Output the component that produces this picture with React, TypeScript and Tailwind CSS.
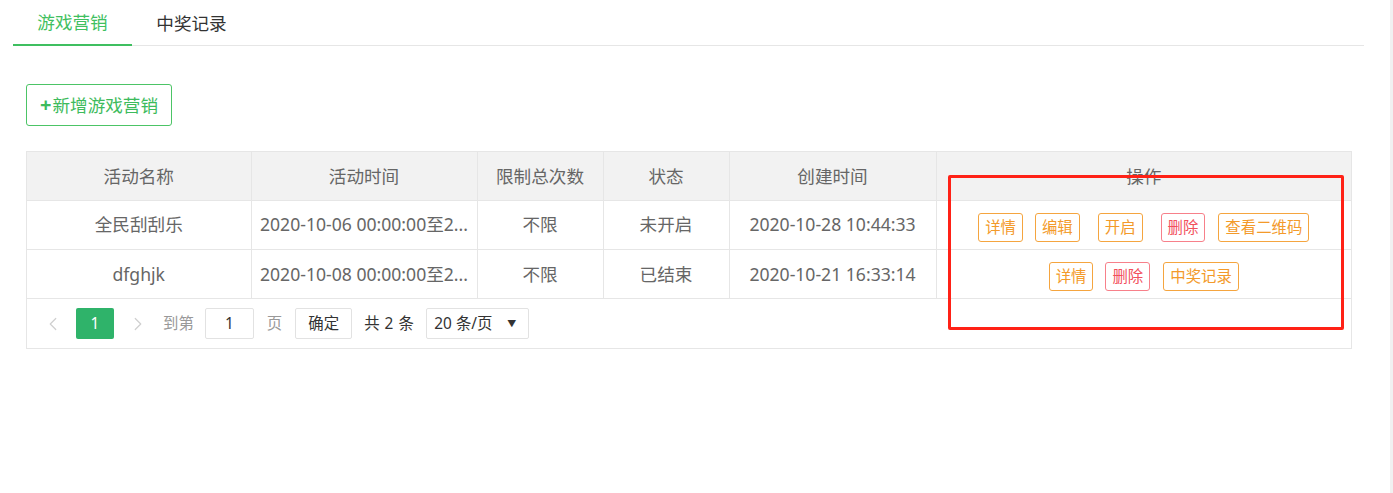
import { ChevronLeft, ChevronRight } from "lucide-react";

const font = { fontFamily: '"Noto Sans", "Noto Sans CJK SC", sans-serif' };

const rows = [
    {
        name: "全民刮刮乐",
        time: "2020-10-06 00:00:00至2...",
        limit: "不限",
        status: "未开启",
        created: "2020-10-28 10:44:33",
        actions: ["详情", "编辑", "开启", "删除", "查看二维码"],
        gaps: ["mr-[12px]", "mr-[18px]", "mr-[18px]", "mr-[13px]", ""],
    },
    {
        name: "dfghjk",
        time: "2020-10-08 00:00:00至2...",
        limit: "不限",
        status: "已结束",
        created: "2020-10-21 16:33:14",
        actions: ["详情", "删除", "中奖记录"],
        gaps: ["mr-[12px]", "mr-[13px]", ""],
    },
];

const headers = ["活动名称", "活动时间", "限制总次数", "状态", "创建时间", "操作"];
const widths = ["w-[224px]", "w-[226px]", "w-[126px]", "w-[126px]", "w-[207px]", "w-[415px]"];

function ActionButton({ label, gap }: { label: string; gap: string }) {
    const danger = label === "删除";
    return (
        <span
            className={`inline-flex items-center h-[29px] px-[6px] border rounded-[3px] text-[15.4px] leading-none ${gap} ${
                danger ? "border-[#f7808a] text-[#f2505c]" : "border-[#f5a53f] text-[#f39a2a]"
            }`}
        >
            {label}
        </span>
    );
}

export default function App() {
    return (
        <div className="relative flex w-[1393px] h-[493px] bg-white overflow-hidden" style={font}>
            <div className="w-[1390px]">
                {/* Tabs */}
                <div className="ml-[13px] w-[1351px] flex border-b border-[#e6e6e6] h-[46px]">
                    <div className="w-[119px] flex items-center justify-center text-[17.6px] text-[#3fbf60] border-b-2 border-[#3fbf60] -mb-px">
                        游戏营销
                    </div>
                    <div className="w-[119px] flex items-center justify-center text-[17.6px] text-[#333] -mb-px">
                        中奖记录
                    </div>
                </div>

                <div className="pl-[26px] pt-[38px]">
                    <button className="h-[42px] w-[146px] flex items-center justify-center border border-[#4cc466] rounded-[3px] text-[#3dbb5c] text-[17.6px]">
                        <span className="text-[20px] font-bold leading-none mr-[1px]">+</span>新增游戏营销
                    </button>

                    {/* Table */}
                    <div className="mt-[25px] w-[1326px] border border-[#e6e6e6]">
                        <table className="w-full table-fixed border-collapse text-[#666] text-[17.6px]">
                            <thead>
                                <tr className="bg-[#f2f2f2] h-[48px]">
                                    {headers.map((h, i) => (
                                        <th
                                            key={h}
                                            className={`${widths[i]} font-normal text-center border-r border-[#e6e6e6] last:border-r-0`}
                                        >
                                            {h}
                                        </th>
                                    ))}
                                </tr>
                            </thead>
                            <tbody>
                                {rows.map((r) => (
                                    <tr key={r.name} className="h-[49px] border-t border-[#e6e6e6]">
                                        <td className="text-center border-r border-[#e6e6e6]">{r.name}</td>
                                        <td className="text-center border-r border-[#e6e6e6] truncate px-2">{r.time}</td>
                                        <td className="text-center border-r border-[#e6e6e6]">{r.limit}</td>
                                        <td className="text-center border-r border-[#e6e6e6]">{r.status}</td>
                                        <td className="text-center border-r border-[#e6e6e6]">{r.created}</td>
                                        <td className="text-center">
                                            <div className="flex justify-center mt-[6px]">
                                                {r.actions.map((a, i) => (
                                                    <ActionButton key={a} label={a} gap={r.gaps[i]} />
                                                ))}
                                            </div>
                                        </td>
                                    </tr>
                                ))}
                            </tbody>
                        </table>

                        {/* Pagination */}
                        <div className="h-[50px] border-t border-[#e6e6e6] flex items-center pl-[15px] text-[15.4px] text-[#666]">
                            <ChevronLeft className="w-[22px] h-[22px] text-[#cfcfcf]" strokeWidth={1.3} />
                            <span className="ml-[12px] w-[38px] h-[31px] rounded-[2px] bg-[#2fb36a] text-white flex items-center justify-center">
                                1
                            </span>
                            <ChevronRight className="ml-[13px] w-[22px] h-[22px] text-[#cfcfcf]" strokeWidth={1.3} />
                            <span className="ml-[14px] text-[#999]">到第</span>
                            <span className="ml-[11px] w-[49px] h-[31px] border border-[#e2e2e2] rounded-[2px] flex items-center justify-center text-[#333]">
                                1
                            </span>
                            <span className="ml-[13px] text-[#999]">页</span>
                            <span className="ml-[13px] w-[57px] h-[31px] border border-[#e2e2e2] rounded-[2px] flex items-center justify-center text-[#333]">
                                确定
                            </span>
                            <span className="ml-[12px] text-[#333] tracking-[0.5px]">共 2 条</span>
                            <span className="ml-[12px] w-[103px] h-[31px] border border-[#e2e2e2] rounded-[2px] flex items-center justify-between pl-[7px] pr-[12px] text-[#333]">
                                <span>20 条/页</span>
                                <span className="text-[9px]">▼</span>
                            </span>
                        </div>
                    </div>
                </div>
            </div>
            <div className="w-[3px] bg-[#f1f1f1]" />

            {/* annotation box */}
            <div className="absolute left-[948px] top-[175px] w-[396px] h-[155px] border-[3px] border-[#ff2116] rounded-[2px]" />
        </div>
    );
}
